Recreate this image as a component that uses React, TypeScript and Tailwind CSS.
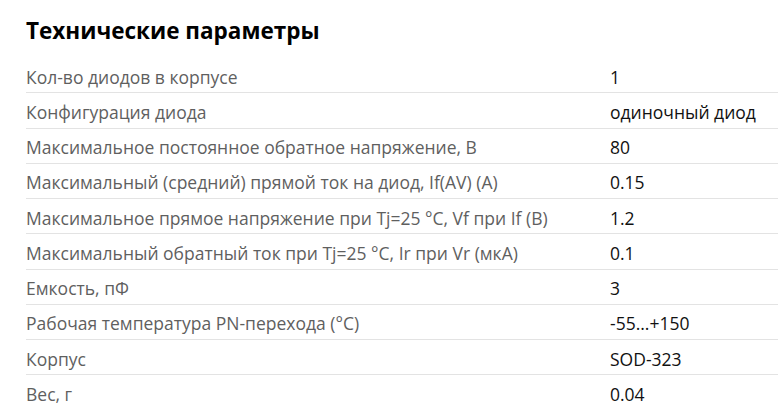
import React from "react";

const rows: [string, string][] = [
  ["Кол-во диодов в корпусе", "1"],
  ["Конфигурация диода", "одиночный диод"],
  ["Максимальное постоянное обратное напряжение, В", "80"],
  ["Максимальный (средний) прямой ток на диод, If(AV) (A)", "0.15"],
  ["Максимальное прямое напряжение при Tj=25 °C, Vf при If (B)", "1.2"],
  ["Максимальный обратный ток при Tj=25 °C, Ir при Vr (мкА)", "0.1"],
  ["Емкость, пФ", "3"],
  ["Рабочая температура PN-перехода (°C)", "-55...+150"],
  ["Корпус", "SOD-323"],
  ["Вес, г", "0.04"],
];

export default function App() {
  return (
    <div
      className="w-[778px] h-[414px] overflow-hidden bg-white pl-[26px]"
      style={{ fontFamily: '"Open Sans", sans-serif' }}
    >
      <h2 className="pt-[16px] h-[58px] text-[22.5px] font-bold leading-[30px] text-black">
        Технические параметры
      </h2>
      <div className="flex flex-col">
        {rows.map(([k, v], i) => (
          <div
            key={i}
            className={`flex h-[35.25px] shrink-0 items-center pt-[3px] text-[17.5px] ${
              i < rows.length - 1 ? "border-b border-[#e3e3e3]" : ""
            }`}
          >
            <div className="w-[584px] shrink-0 text-[#5f5f5f]">{k}</div>
            <div className="text-[#111]">{v}</div>
          </div>
        ))}
      </div>
    </div>
  );
}
